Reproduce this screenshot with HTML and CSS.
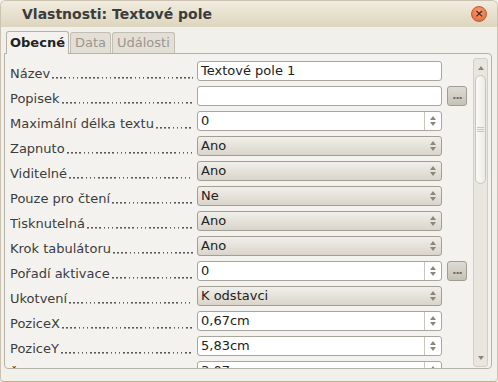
FILE: index.html
```html
<!DOCTYPE html>
<html lang="cs">
<head>
    <meta charset="UTF-8">
    <title>Vlastnosti: Textové pole</title>
    <link rel="stylesheet" href="styles.css">
</head>
<body>
    <div class="window">
        <div class="titlebar">
            <span class="title">Vlastnosti: Textové pole</span>
            <span class="close">&#215;</span>
        </div>

        <!-- tabs -->
        <div class="tabs">
            <div class="tab active">Obecné</div>
            <div class="tab">Data</div>
            <div class="tab">Události</div>
        </div>

        <div class="panel">
            <div class="rows">
                <div class="row">
                    <div class="label"><span>Název</span><span class="dots"></span></div>
                    <div class="field text">Textové pole 1</div>
                </div>
                <div class="row">
                    <div class="label"><span>Popisek</span><span class="dots"></span></div>
                    <div class="field text"></div>
                    <div class="more">...</div>
                </div>
                <div class="row">
                    <div class="label"><span>Maximální délka textu</span><span class="dots"></span></div>
                    <div class="field spin"><span class="value">0</span><span class="arrows"><i class="up"></i><i class="down"></i></span></div>
                </div>
                <div class="row">
                    <div class="label"><span>Zapnuto</span><span class="dots"></span></div>
                    <div class="field select"><span class="value">Ano</span><span class="arrows"><i class="up"></i><i class="down"></i></span></div>
                </div>
                <div class="row">
                    <div class="label"><span>Viditelné</span><span class="dots"></span></div>
                    <div class="field select"><span class="value">Ano</span><span class="arrows"><i class="up"></i><i class="down"></i></span></div>
                </div>
                <div class="row">
                    <div class="label"><span>Pouze pro čtení</span><span class="dots"></span></div>
                    <div class="field select"><span class="value">Ne</span><span class="arrows"><i class="up"></i><i class="down"></i></span></div>
                </div>
                <div class="row">
                    <div class="label"><span>Tisknutelná</span><span class="dots"></span></div>
                    <div class="field select"><span class="value">Ano</span><span class="arrows"><i class="up"></i><i class="down"></i></span></div>
                </div>
                <div class="row">
                    <div class="label"><span>Krok tabulátoru</span><span class="dots"></span></div>
                    <div class="field select"><span class="value">Ano</span><span class="arrows"><i class="up"></i><i class="down"></i></span></div>
                </div>
                <div class="row">
                    <div class="label"><span>Pořadí aktivace</span><span class="dots"></span></div>
                    <div class="field spin"><span class="value">0</span><span class="arrows"><i class="up"></i><i class="down"></i></span></div>
                    <div class="more">...</div>
                </div>
                <div class="row">
                    <div class="label"><span>Ukotvení</span><span class="dots"></span></div>
                    <div class="field select"><span class="value">K odstavci</span><span class="arrows"><i class="up"></i><i class="down"></i></span></div>
                </div>
                <div class="row">
                    <div class="label"><span>PoziceX</span><span class="dots"></span></div>
                    <div class="field spin"><span class="value">0,67cm</span><span class="arrows"><i class="up"></i><i class="down"></i></span></div>
                </div>
                <div class="row">
                    <div class="label"><span>PoziceY</span><span class="dots"></span></div>
                    <div class="field spin"><span class="value">5,83cm</span><span class="arrows"><i class="up"></i><i class="down"></i></span></div>
                </div>
                <div class="row">
                    <div class="label"><span>Šířka</span><span class="dots"></span></div>
                    <div class="field spin"><span class="value">3,07cm</span><span class="arrows"><i class="up"></i><i class="down"></i></span></div>
                </div>
            </div>

            <!-- scrollbar -->
            <div class="scrollbar">
                <i class="up"></i>
                <div class="track">
                    <div class="thumb"><span class="grip"></span></div>
                </div>
                <i class="down"></i>
            </div>
        </div>
    </div>
</body>
</html>
```

FILE: styles.css
```css
body {
    margin: 0;
    padding: 0;
    font-family: "DejaVu Sans", sans-serif;
    background-color: #f2f0eb;
}
.window {
    width: 498px;
    height: 382px;
    box-sizing: border-box;
    background-color: #f2f0eb;
    border: 1px solid #cbc3b0;
    border-bottom-color: #d9a77a;
    border-radius: 6px 6px 4px 4px;
    overflow: hidden;
}
.titlebar {
    height: 26px;
    display: flex;
    align-items: center;
    justify-content: space-between;
    padding: 0 10px 0 21px;
    background: linear-gradient(#f1ecdf, #ddd5bd);
}
.title {
    font-size: 14px;
    font-weight: bold;
    color: #3c3c3c;
}
.close {
    width: 14px;
    height: 14px;
    border-radius: 50%;
    background: radial-gradient(circle at 50% 35%, #f7a27a, #dc6232);
    border: 1px solid #c65a2e;
    color: #5a2a14;
    font-size: 11px;
    line-height: 13px;
    text-align: center;
    font-weight: bold;
}
.tabs {
    display: flex;
    align-items: flex-end;
    height: 27px;
    padding-left: 5px;
    margin-top: -1px;
}
.tab {
    height: 20px;
    padding: 0 4px;
    font-size: 13px;
    line-height: 20px;
    color: #9a978f;
    background-color: #e3dfd7;
    border: 1px solid #c2beb4;
    border-bottom: none;
    border-radius: 3px 3px 0 0;
    margin-right: 1px;
}
.tab.active {
    height: 22px;
    line-height: 22px;
    padding: 0 3px;
    color: #222;
    font-weight: bold;
    background-color: #f4f2ee;
    border-color: #b6b2a7;
    position: relative;
    top: 1px;
}
.panel {
    margin: 0 5px 0 3px;
    height: 316px;
    box-sizing: border-box;
    border: 1px solid #b6b2a7;
    border-radius: 0 4px 4px 4px;
    background-color: #f4f2ee;
    display: flex;
    padding: 4px 3px 1px 5px;
}
.rows {
    width: 462px;
    height: 310px;
    overflow: hidden;
    padding-top: 3px;
    box-sizing: border-box;
}
.row {
    display: flex;
    height: 20px;
    margin-bottom: 5px;
}
.label {
    width: 183px;
    margin-right: 4px;
    display: flex;
    font-size: 13px;
    color: #3c3c3c;
    line-height: 20px;
    padding-top: 3px;
    white-space: nowrap;
}
/* dotted leader after the label */
.dots {
    flex: 1;
    margin-left: 1px;
    background-image: repeating-linear-gradient(90deg, #5a5a5a 0 1.6px, transparent 1.6px 4.13px);
    background-size: 100% 1.6px;
    background-position: 1px 13px;
    background-repeat: no-repeat;
}
.field {
    width: 245px;
    height: 20px;
    box-sizing: border-box;
    border: 1px solid #a8a59c;
    border-radius: 3px;
    background-color: #ffffff;
    font-size: 13px;
    color: #222;
    line-height: 18px;
    padding-left: 3px;
    display: flex;
}
.field .value {
    flex: 1;
    white-space: nowrap;
}
.field.select {
    background: linear-gradient(#f1efea, #d9d5cc);
    border-color: #a29e94;
}
.arrows {
    width: 16px;
    display: flex;
    flex-direction: column;
    align-items: center;
    justify-content: center;
    gap: 2px;
}
.field.spin .arrows {
    border-left: 1px solid #c9c6be;
}
.up, .down {
    display: block;
    width: 0;
    height: 0;
    border-left: 3px solid transparent;
    border-right: 3px solid transparent;
}
.up {
    border-bottom: 4px solid #8a877f;
}
.down {
    border-top: 4px solid #8a877f;
}
.more {
    width: 20px;
    height: 20px;
    box-sizing: border-box;
    margin-left: 5px;
    border: 1px solid #a19d93;
    border-radius: 3px;
    background: linear-gradient(#dedbd4, #c6c2b8);
    font-size: 11px;
    line-height: 18px;
    text-align: center;
    color: #6c6961;
    font-weight: bold;
    letter-spacing: -1px;
}
.scrollbar {
    width: 15px;
    height: 309px;
    margin-left: 5px;
    box-sizing: border-box;
    border: 1px solid #d3cfc6;
    border-radius: 3px;
    background-color: #e9e6e0;
    display: flex;
    flex-direction: column;
    align-items: center;
    padding: 7px 0 6px;
}
.track {
    flex: 1;
    width: 100%;
    padding: 5px 0;
    box-sizing: border-box;
}
.thumb {
    height: 107px;
    margin: 0 1px;
    border: 1px solid #c9c5bc;
    border-radius: 6px;
    background: linear-gradient(90deg, #fbfaf8, #ecebe6);
    display: flex;
    align-items: center;
    justify-content: center;
}
.grip {
    width: 7px;
    height: 5px;
    border-top: 1px solid #c9c6be;
    border-bottom: 1px solid #c9c6be;
    box-sizing: border-box;
    background: linear-gradient(#c9c6be, #c9c6be) center / 100% 1px no-repeat;
}
```
